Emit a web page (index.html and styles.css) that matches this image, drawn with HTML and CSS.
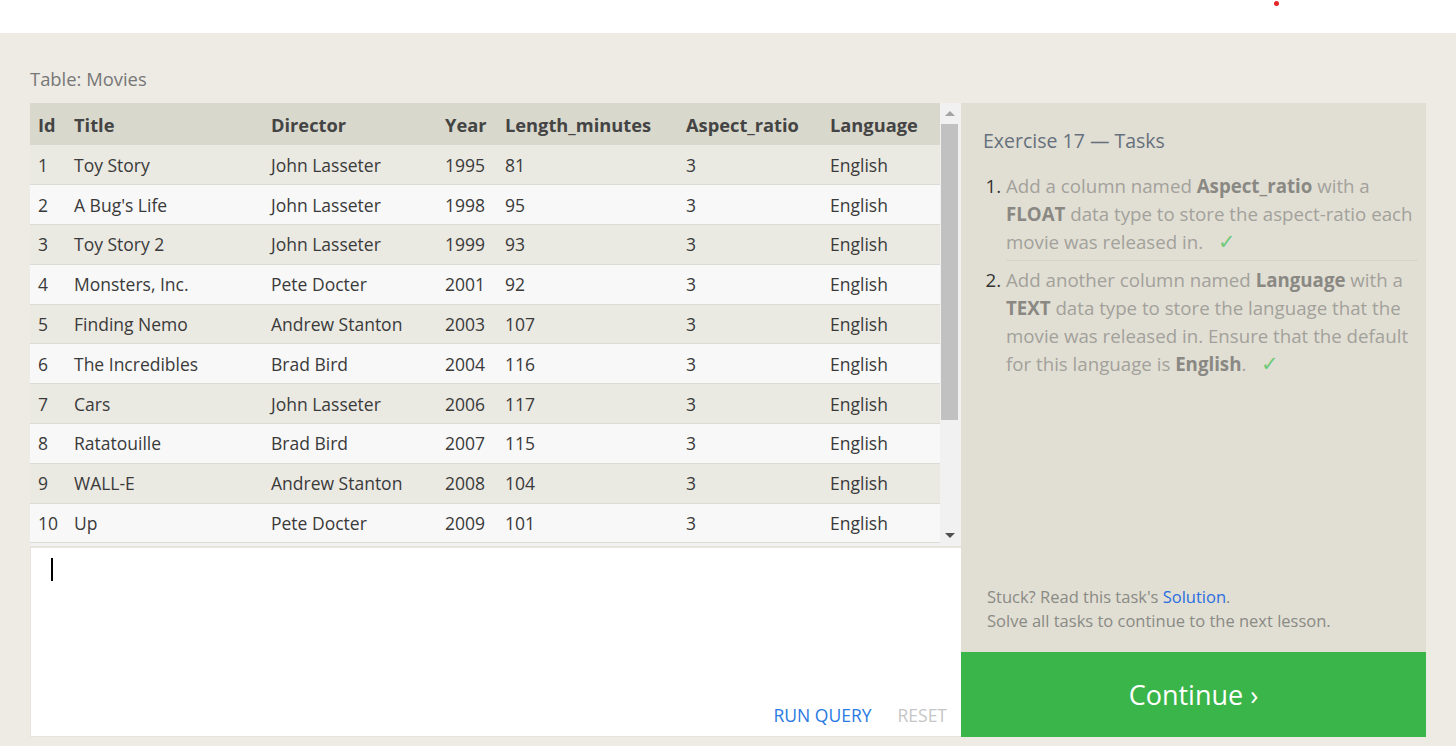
FILE: index.html
```html
<!DOCTYPE html>
<html lang="en">
<head>
<meta charset="utf-8">
<title>SQL Exercise 17</title>
<link rel="stylesheet" href="styles.css">
</head>
<body>
<header class="topbar"><span class="dot"></span></header>
<main class="main">
  <div class="caption">Table: Movies</div>
  <div class="workspace">
    <section class="left">
      <div class="table-wrap">
        <table class="data">
          <colgroup>
            <col class="c-id"><col class="c-title"><col class="c-dir"><col class="c-year"><col class="c-len"><col class="c-asp"><col class="c-lang">
          </colgroup>
          <thead>
            <tr><th>Id</th><th>Title</th><th>Director</th><th>Year</th><th>Length_minutes</th><th>Aspect_ratio</th><th>Language</th></tr>
          </thead>
          <tbody>
            <tr><td>1</td><td>Toy Story</td><td>John Lasseter</td><td>1995</td><td>81</td><td>3</td><td>English</td></tr>
            <tr><td>2</td><td>A Bug's Life</td><td>John Lasseter</td><td>1998</td><td>95</td><td>3</td><td>English</td></tr>
            <tr><td>3</td><td>Toy Story 2</td><td>John Lasseter</td><td>1999</td><td>93</td><td>3</td><td>English</td></tr>
            <tr><td>4</td><td>Monsters, Inc.</td><td>Pete Docter</td><td>2001</td><td>92</td><td>3</td><td>English</td></tr>
            <tr><td>5</td><td>Finding Nemo</td><td>Andrew Stanton</td><td>2003</td><td>107</td><td>3</td><td>English</td></tr>
            <tr><td>6</td><td>The Incredibles</td><td>Brad Bird</td><td>2004</td><td>116</td><td>3</td><td>English</td></tr>
            <tr><td>7</td><td>Cars</td><td>John Lasseter</td><td>2006</td><td>117</td><td>3</td><td>English</td></tr>
            <tr><td>8</td><td>Ratatouille</td><td>Brad Bird</td><td>2007</td><td>115</td><td>3</td><td>English</td></tr>
            <tr><td>9</td><td>WALL-E</td><td>Andrew Stanton</td><td>2008</td><td>104</td><td>3</td><td>English</td></tr>
            <tr><td>10</td><td>Up</td><td>Pete Docter</td><td>2009</td><td>101</td><td>3</td><td>English</td></tr>
          </tbody>
        </table>
        <div class="scrollbar">
          <span class="arrow up"></span>
          <span class="thumb"></span>
          <span class="track"></span>
          <span class="arrow down"></span>
        </div>
      </div>
      <div class="editor">
        <div class="input"><span class="cursor"></span></div>
        <div class="actions">
          <span class="run">RUN QUERY</span>
          <span class="reset">RESET</span>
        </div>
      </div>
    </section>
    <aside class="panel">
      <div class="tasks">
        <h2 class="tasks-title">Exercise 17 — Tasks</h2>
        <ol class="task-list">
          <li>Add a column named <b>Aspect_ratio</b> with a <b>FLOAT</b> data type to store the aspect-ratio each movie was released in. <span class="check">✓</span></li>
          <li>Add another column named <b>Language</b> with a <b>TEXT</b> data type to store the language that the movie was released in. Ensure that the default for this language is <b>English</b>. <span class="check">✓</span></li>
        </ol>
      </div>
      <div class="help">
        <p>Stuck? Read this task's <a class="link">Solution</a>.</p>
        <p>Solve all tasks to continue to the next lesson.</p>
      </div>
      <div class="continue">Continue ›</div>
    </aside>
  </div>
</main>
</body>
</html>
```
FILE: styles.css
```css
* { box-sizing: border-box; }
html, body { margin: 0; padding: 0; }
body {
  font-family: "Open Sans", "Noto Sans", sans-serif;
  background: #eeebe4;
  color: #333;
  height: 746px;
  overflow: hidden;
}
.topbar {
  height: 33px;
  background: #fff;
  position: relative;
}
.dot {
  position: absolute;
  left: 1274px;
  top: 1px;
  width: 5px;
  height: 5px;
  border-radius: 50%;
  background: #e8262a;
}
.main {
  padding: 35px 30px 0 30px;
}
.caption {
  font-size: 18.4px;
  color: #777;
  line-height: 22px;
  height: 35px;
}
.workspace {
  display: flex;
  align-items: stretch;
  height: 634px;
}
.left {
  width: 931px;
  display: flex;
  flex-direction: column;
}
.table-wrap {
  display: flex;
  height: 443px;
  background: #f1f1f1;
}
.data {
  width: 910px;
  table-layout: fixed;
  border-collapse: collapse;
  border-spacing: 0;
  align-self: flex-start;
}
.c-id { width: 36px; }
.c-title { width: 197px; }
.c-dir { width: 174px; }
.c-year { width: 60px; }
.c-len { width: 181px; }
.c-asp { width: 144px; }
.c-lang { width: 118px; }
.data th {
  background: #d9d8cc;
  height: 42px;
  text-align: left;
  font-weight: 700;
  font-size: 18.25px;
  color: #444;
  padding: 0 8px;
  white-space: nowrap;
}
.data td {
  height: 39.8px;
  font-size: 17.5px;
  color: #3a3a3a;
  padding: 0 8px;
  border-bottom: 1px solid #dcdcd6;
  white-space: nowrap;
}
.data tbody tr:nth-child(odd) td { background: #eae9e2; }
.data tbody tr:nth-child(even) td { background: #f8f8f8; }
.scrollbar {
  width: 20px;
  display: flex;
  flex-direction: column;
  align-items: center;
  background: #f1f1f1;
  padding: 0 2px 0 1px;
}
.arrow {
  height: 21px;
  width: 100%;
  display: flex;
  align-items: center;
  justify-content: center;
}
.arrow::before {
  content: "";
  border-left: 5px solid transparent;
  border-right: 5px solid transparent;
}
.arrow.up::before { border-bottom: 5px solid #a3a3a3; }
.arrow.down::before { border-top: 5px solid #505050; }
.thumb {
  width: 17px;
  height: 296px;
  background: #c1c1c1;
}
.track { flex: 1; }
.editor {
  flex: 1;
  background: #fff;
  border-top: 2px solid #e6e4dd;
  border-left: 1px solid #e6e4dd;
  border-bottom: 1px solid #e6e4dd;
  display: flex;
  flex-direction: column;
  justify-content: space-between;
}
.input { padding: 10px 20px; }
.cursor {
  display: block;
  width: 2px;
  height: 23px;
  background: #000;
}
.actions {
  display: flex;
  justify-content: flex-end;
  gap: 26px;
  padding: 0 14px 10px 0;
  font-size: 17.5px;
  line-height: 22px;
}
.run { color: #2a7ae2; }
.reset { color: #c6c6c6; }
.panel {
  width: 465px;
  background: #e1dfd4;
  display: flex;
  flex-direction: column;
}
.tasks {
  flex: 1;
  padding: 26px 8px 0 22px;
}
.tasks-title {
  margin: 0 0 19px 0;
  font-size: 19.5px;
  font-weight: 400;
  color: #66707c;
  line-height: 24px;
}
.task-list {
  margin: 0;
  padding: 0 0 0 23px;
  font-size: 18.7px;
  line-height: 28px;
  color: #a3a19b;
}
.task-list li::marker { color: #333; }
.task-list li {
  padding: 0 0 4px 0;
}
.task-list li + li {
  border-top: 1px solid #d6d4ca;
  padding-top: 5px;
}
.task-list b { color: #8a8883; font-weight: 700; }
.check {
  color: #6ecb7a;
  margin-left: 10px;
  font-size: 21px;
  line-height: 20px;
}
.help {
  padding: 0 20px 19px 26px;
  font-size: 16.5px;
  line-height: 24px;
  color: #8a8a84;
}
.help p { margin: 0; }
.link { color: #2a6ee0; text-decoration: none; }
.continue {
  height: 85px;
  background: #3ab54a;
  color: #fff;
  font-size: 27px;
  display: flex;
  align-items: center;
  justify-content: center;
}
```
